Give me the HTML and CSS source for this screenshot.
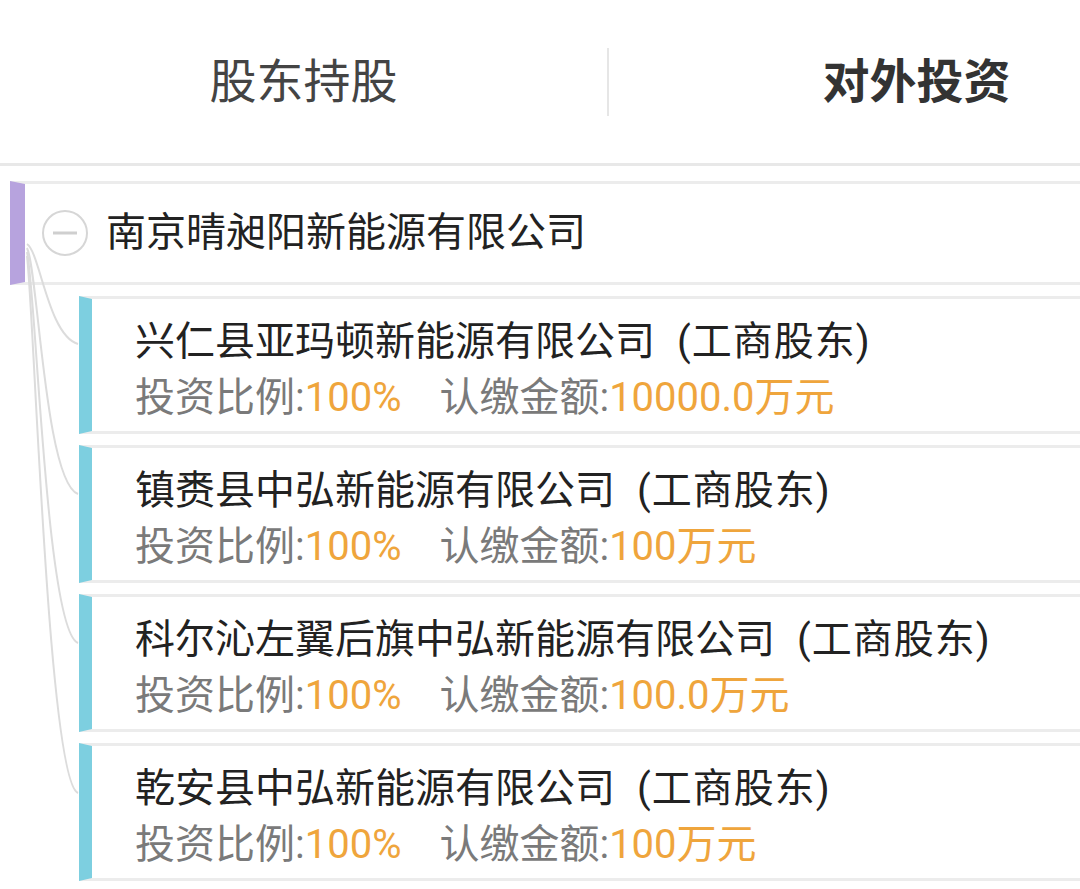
FILE: index.html
```html
<!DOCTYPE html>
<html lang="zh-CN">
<head>
<meta charset="utf-8">
<title>对外投资</title>
<link rel="stylesheet" href="styles.css">
</head>
<body>
<div class="page">
  <div class="tabs">
    <div class="tab">股东持股</div>
    <div class="divider"></div>
    <div class="tab active">对外投资</div>
  </div>

  <div class="tree">
    <svg class="links" width="100" height="889" viewBox="0 0 100 889">
      <g fill="none" stroke="#dcdcdc" stroke-width="2">
        <path d="M27 244 C 40 252, 48 335, 78 344"/>
        <path d="M27 248 C 38 270, 45 482, 78 494"/>
        <path d="M27 252 C 36 290, 46 631, 78 643"/>
        <path d="M27 256 C 34 310, 48 781, 78 793"/>
      </g>
    </svg>

    <div class="root">
      <svg class="toggle" width="50" height="50" viewBox="0 0 50 50">
        <circle cx="25" cy="25" r="22" fill="#fff" stroke="#d6d6d6" stroke-width="2"/>
        <line x1="13" y1="25" x2="37" y2="25" stroke="#cfcfcf" stroke-width="3"/>
      </svg>
      <span class="root-name">南京晴昶阳新能源有限公司</span>
    </div>

    <div class="children">
      <div class="child">
        <div class="title">兴仁县亚玛顿新能源有限公司<span class="role">(工商股东)</span></div>
        <div class="meta"><span class="label">投资比例:</span><span class="value">100%</span><span class="label gap">认缴金额:</span><span class="value">10000.0万元</span></div>
      </div>
      <div class="child">
        <div class="title">镇赉县中弘新能源有限公司<span class="role">(工商股东)</span></div>
        <div class="meta"><span class="label">投资比例:</span><span class="value">100%</span><span class="label gap">认缴金额:</span><span class="value">100万元</span></div>
      </div>
      <div class="child">
        <div class="title">科尔沁左翼后旗中弘新能源有限公司<span class="role">(工商股东)</span></div>
        <div class="meta"><span class="label">投资比例:</span><span class="value">100%</span><span class="label gap">认缴金额:</span><span class="value">100.0万元</span></div>
      </div>
      <div class="child">
        <div class="title">乾安县中弘新能源有限公司<span class="role">(工商股东)</span></div>
        <div class="meta"><span class="label">投资比例:</span><span class="value">100%</span><span class="label gap">认缴金额:</span><span class="value">100万元</span></div>
      </div>
    </div>
  </div>
</div>
</body>
</html>
```

FILE: styles.css
```css
html, body {
  margin: 0;
  padding: 0;
  background: #fff;
  overflow: hidden;
}

body {
  width: 1080px;
  height: 889px;
  font-family: Roboto, "Noto Sans CJK SC", "Noto Sans", sans-serif;
  color: #222;
}

.page {
  position: relative;
  width: 1080px;
  height: 889px;
  overflow: hidden;
}

.tabs {
  display: flex;
  align-items: center;
  width: 1224px;
  height: 163px;
  border-bottom: 3px solid #e8e8e8;
}

.tab {
  flex: 0 0 607px;
  text-align: center;
  font-size: 47px;
  line-height: 60px;
  margin-bottom: 8px;
  color: #444;
  font-family: "Noto Sans CJK SC", sans-serif;
  font-weight: 400;
}

.tab.active {
  flex: 0 0 615px;
  font-weight: 700;
  color: #333;
}

.divider {
  flex: 0 0 2px;
  height: 68px;
  background: #e6e6e6;
}

.tree {
  position: relative;
  padding-top: 15px;
}

.links {
  position: absolute;
  left: 0;
  top: -166px;
  z-index: 2;
  pointer-events: none;
}

.root {
  display: flex;
  align-items: center;
  margin-left: 10px;
  height: 98px;
  border-top: 3px solid #ececec;
  border-bottom: 3px solid #ececec;
  border-left: 15px solid #b7a3de;
  padding-left: 15px;
}

.toggle {
  flex: 0 0 auto;
  margin-right: 16px;
}

.root-name {
  font-size: 40px;
  line-height: 56px;
  color: #222;
  white-space: nowrap;
}

.children {
  display: flex;
  flex-direction: column;
  gap: 11px;
  margin-top: 11px;
  margin-left: 79px;
}

.child {
  border-top: 3px solid #ececec;
  border-bottom: 3px solid #ececec;
  border-left: 13px solid #7dcfe0;
  padding: 14px 0 5px 43px;
  white-space: nowrap;
}

.title {
  font-size: 40px;
  line-height: 57px;
  color: #222;
}

.role {
  margin-left: 22px;
  letter-spacing: 1px;
}

.meta {
  font-size: 40px;
  line-height: 56px;
}

.label {
  color: #7a7a7a;
}

.value {
  color: #efa53c;
}

.gap {
  margin-left: 38px;
}
```
